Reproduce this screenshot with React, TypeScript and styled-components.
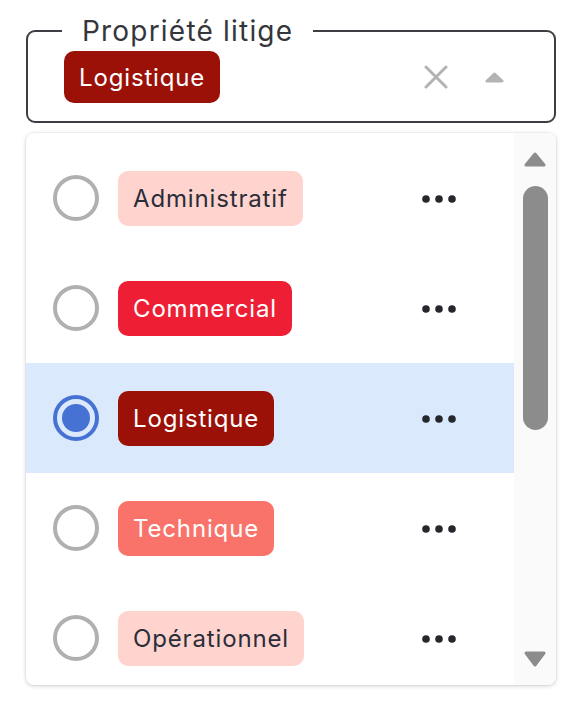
import React from "react";
import styled, { createGlobalStyle } from "styled-components";

const GlobalStyle = createGlobalStyle`
  html, body { margin: 0; padding: 0; background: #ffffff; }
  body { font-family: Inter, "Noto Sans", sans-serif; }
`;

const Page = styled.div`
  width: 588px;
  height: 710px;
  box-sizing: border-box;
  padding: 14px 32px 0 26px;
  display: flex;
  flex-direction: column;
  gap: 10px;
`;

const Field = styled.fieldset`
  margin: 0;
  border: 2px solid #3c3e43;
  border-radius: 9px;
  padding: 3px 50px 18px 36px;
  display: flex;
  align-items: center;
  min-inline-size: 0;
`;

const Legend = styled.legend`
  margin-left: -2px;
  padding: 0 20px;
  font-size: 28px;
  line-height: 34px;
  letter-spacing: 1.2px;
  color: #34363b;
  font-weight: 400;
`;

const Row = styled.div`
  display: flex;
  align-items: center;
  width: 100%;
`;

const Chip = styled.span<{ $bg: string; $fg: string; $h: number }>`
  display: inline-flex;
  align-items: center;
  height: ${(p) => p.$h}px;
  padding: 0 15px;
  border-radius: 10px;
  background: ${(p) => p.$bg};
  color: ${(p) => p.$fg};
  font-size: 24px;
  letter-spacing: 0.85px;
  white-space: nowrap;
`;

const Spacer = styled.div`
  flex: 1;
`;

const IconSlot = styled.span<{ $mr?: number }>`
  display: inline-flex;
  margin-right: ${(p) => p.$mr ?? 0}px;
`;

const Panel = styled.div`
  height: 552px;
  border-radius: 8px;
  background: #ffffff;
  box-shadow: 0 1px 4px rgba(0, 0, 0, 0.18), 0 0 0 1px rgba(0, 0, 0, 0.03);
  display: flex;
  overflow: hidden;
`;

const List = styled.ul`
  list-style: none;
  margin: 0;
  padding: 10px 0 0 0;
  flex: 1;
  overflow: hidden;
`;

const Option = styled.li<{ $selected: boolean }>`
  height: 110px;
  display: flex;
  align-items: center;
  padding: 0 58px 0 27px;
  background: ${(p) => (p.$selected ? "#dbe9fd" : "transparent")};
  gap: 19px;
`;

const Scrollbar = styled.div`
  width: 42px;
  background: #fafafa;
  display: flex;
  flex-direction: column;
  align-items: center;
  padding: 19px 0 18px 0;
  box-sizing: border-box;
`;

const Thumb = styled.div`
  width: 25px;
  height: 244px;
  border-radius: 13px;
  background: #8c8c8c;
  margin-top: 19px;
  margin-left: 1px;
`;

const Radio = ({ checked }: { checked: boolean }) => (
  <svg width="46" height="46" viewBox="0 0 46 46">
    <circle
      cx="23"
      cy="23"
      r="21"
      fill="none"
      stroke={checked ? "#4672d4" : "#b0b0b0"}
      strokeWidth="4"
    />
    {checked && <circle cx="23" cy="23" r="14" fill="#4672d4" />}
  </svg>
);

const Dots = () => (
  <svg width="34" height="8" viewBox="0 0 34 8" style={{ marginTop: 2 }}>
    <circle cx="4" cy="4" r="3.8" fill="#25272d" />
    <circle cx="17" cy="4" r="3.8" fill="#25272d" />
    <circle cx="30" cy="4" r="3.8" fill="#25272d" />
  </svg>
);

const ClearIcon = () => (
  <svg width="24" height="24" viewBox="0 0 24 24">
    <path
      d="M2 2 L22 22 M22 2 L2 22"
      stroke="#b3b3b3"
      strokeWidth="3"
      strokeLinecap="round"
      fill="none"
    />
  </svg>
);

const Caret = ({
  up,
  color,
  w,
  h,
}: {
  up: boolean;
  color: string;
  w: number;
  h: number;
}) => (
  <svg width={w} height={h} viewBox={`0 0 ${w} ${h}`}>
    <polygon
      points={
        up
          ? `2,${h - 2} ${w / 2},2 ${w - 2},${h - 2}`
          : `2,2 ${w / 2},${h - 2} ${w - 2},2`
      }
      fill={color}
      stroke={color}
      strokeWidth="3"
      strokeLinejoin="round"
    />
  </svg>
);

type Item = { label: string; bg: string; fg: string };

const items: Item[] = [
  { label: "Administratif", bg: "#ffd4cf", fg: "#2b2d38" },
  { label: "Commercial", bg: "#ee1f35", fg: "#ffffff" },
  { label: "Logistique", bg: "#9b1108", fg: "#ffffff" },
  { label: "Technique", bg: "#f9736a", fg: "#ffffff" },
  { label: "Opérationnel", bg: "#ffd4cf", fg: "#2b2d38" },
];

const selected = "Logistique";

export default function App() {
  return (
    <>
      <GlobalStyle />
      <Page>
        <Field>
          <Legend>Propriété litige</Legend>
          <Row>
            <Chip $bg="#9b1108" $fg="#ffffff" $h={52}>
              Logistique
            </Chip>
            <Spacer />
            <IconSlot $mr={37}>
              <ClearIcon />
            </IconSlot>
            <IconSlot>
              <Caret up color="#b3b3b3" w={19} h={11} />
            </IconSlot>
          </Row>
        </Field>
        <Panel>
          <List>
            {items.map((it) => (
              <Option key={it.label} $selected={it.label === selected}>
                <Radio checked={it.label === selected} />
                <Chip $bg={it.bg} $fg={it.fg} $h={55}>
                  {it.label}
                </Chip>
                <Spacer />
                <Dots />
              </Option>
            ))}
          </List>
          <Scrollbar>
            <Caret up color="#8c8c8c" w={22} h={15} />
            <Thumb />
            <Spacer />
            <Caret up={false} color="#8c8c8c" w={22} h={16} />
          </Scrollbar>
        </Panel>
      </Page>
    </>
  );
}
